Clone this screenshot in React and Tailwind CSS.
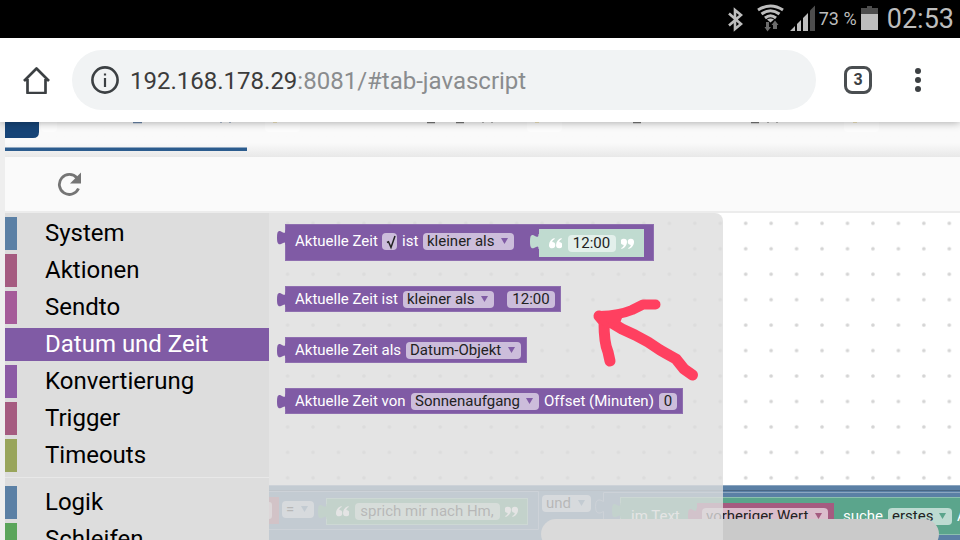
import React from "react";

const CATEGORIES = [
  { name: "System", color: "bg-[#5b80a5]" },
  { name: "Aktionen", color: "bg-[#a55b80]" },
  { name: "Sendto", color: "bg-[#a55b99]" },
  { name: "Datum und Zeit", color: "bg-[#805ba5]", active: true },
  { name: "Konvertierung", color: "bg-[#8c5ba5]" },
  { name: "Trigger", color: "bg-[#a55b80]" },
  { name: "Timeouts", color: "bg-[#99a55b]" },
];

const MORE_CATEGORIES = [
  { name: "Logik", color: "bg-[#5b80a5]" },
  { name: "Schleifen", color: "bg-[#5ba55b]" },
];

function StatusBar() {
  return (
    <div className="flex h-[38px] shrink-0 items-center justify-end bg-black pr-1.5 text-[#bdbdbd]">
      <svg className="h-[38px] w-[90px]" viewBox="726 0 90 38" fill="none" aria-hidden="true">
        <path d="M729 13.500l12 10.500-6 5V10l6 5-12 10.500" stroke="#bdbdbd" strokeWidth="2.600" />
        <g stroke="#bdbdbd" strokeWidth="3">
          <path d="M758 10q12.500-8 25 0" />
          <path d="M761.500 14q9-6.500 18 0" />
          <path d="M765 18q5.500-4.500 11 0" />
        </g>
        <path d="M767 19.500q3.500-2 7 0l-3.500 3z" fill="#bdbdbd" />
        <path d="M766 22h3v5h2l-3.500 4.500L764.500 27h1.500z M773 29v-4h-1.500l3.500-4.500 3.500 4.500H777v4z" fill="#6b6b6b" />
        <path d="M790 31l5-5v5z M797 24l4-4v11h-4z M803 18l5-5v18h-5z" fill="#bdbdbd" />
        <path d="M810 10.500l5-5V31h-5z" fill="#4d4d4d" />
      </svg>
      <span className="ml-[3px] w-[42px] whitespace-nowrap text-[18px] leading-[38px]">73 %</span>
      <svg className="h-[38px] w-[18px]" viewBox="861 0 18 38" aria-hidden="true">
        <path d="M861 8h6V6h5v2h6v6h-17z" fill="#4d4d4d" />
        <path d="M861 14h17v16h-17z" fill="#bdbdbd" />
      </svg>
      <span className="ml-2 text-[27px] leading-[38px]">02:53</span>
    </div>
  );
}

function BrowserBar() {
  return (
    <header className="relative z-10 flex h-[84px] shrink-0 items-center bg-white shadow-[0_1px_8px_rgba(0,0,0,0.3)]">
      <button type="button" aria-label="Startseite" className="ml-[22px] h-7 w-7">
        <svg viewBox="22 66 28 28" fill="none" stroke="#3c4043" strokeWidth="2.700" strokeLinejoin="round" aria-hidden="true">
          <path d="M24 81L36.500 68.500 49 81M27.500 79v14h18V79" />
        </svg>
      </button>
      <button
        type="button"
        aria-label="Adressleiste"
        className="ml-[22px] flex h-[60px] min-w-0 flex-1 items-center rounded-full bg-[#f1f3f4] pl-[18px] text-left text-[24px] text-[#3c3c3c]"
      >
        <svg className="mr-2.5 h-[30px] w-[30px] shrink-0" viewBox="0 0 30 30" fill="none" aria-hidden="true">
          <circle cx="15" cy="15" r="12.600" stroke="#3c4043" strokeWidth="2.600" />
          <path d="M13.900 8.500h2.200v2h-2.200zM13.900 13h2.200v9h-2.200z" fill="#3c4043" />
        </svg>
        <span className="pt-0.5">192.168.178.29</span>
        <span className="truncate pt-0.5 text-[#8a8c8e]">:8081/#tab-javascript</span>
      </button>
      <button
        type="button"
        aria-label="Tabs"
        className="ml-7 flex h-7 w-7 items-center justify-center rounded-lg border-[3px] border-[#4a4e51] text-[16px] font-bold text-[#3c4043]"
      >
        3
      </button>
      <button type="button" aria-label="Mehr" className="mr-7 ml-8 h-7 w-7">
        <svg viewBox="0 0 28 28" fill="#3c4043" aria-hidden="true">
          <circle cx="14" cy="5" r="3" />
          <circle cx="14" cy="14" r="3" />
          <circle cx="14" cy="23" r="3" />
        </svg>
      </button>
    </header>
  );
}

function TabStrip() {
  return (
    <div className="h-[35px] shrink-0 overflow-hidden bg-linear-to-b from-[#fafafa] from-60% to-[#e8e8e8]">
      <svg className="h-[35px] w-[955px]" viewBox="5 122 955 35" aria-hidden="true">
        <path d="M5 118h34v14q0 6-6 6H5z" fill="#164477" />
        <path d="M5 147.500h242v3.500H5z" fill="#2c5c8e" />
        <g fill="#fdfdfd">
          <rect x="41" y="116" width="16" height="16" rx="4" />
          <rect x="265" y="116" width="35" height="16" rx="4" />
          <rect x="527" y="116" width="35" height="16" rx="4" />
          <rect x="844" y="116" width="35" height="16" rx="4" />
        </g>
        <path d="M133 122h9v1.200h-9zM220 122h2v.6h-2zM229 122h2v.6h-2z" fill="#6b86ab" />
        <path d="M427 122h8v1.200h-8zM456 122h8v1.200h-8zM482 122h2v.6h-2zM491 122h2v.6h-2zM633 122h8v1.200h-8zM751 122h8v1.200h-8zM767 122h2v.6h-2zM776 122h2v.6h-2z" fill="#777" />
        <path d="M273 122h4v.6h-4zM535 122h4v.6h-4zM853 122h4v.6h-4z" fill="#e6cf83" />
      </svg>
    </div>
  );
}

function Category({ name, color, active }) {
  return (
    <button
      type="button"
      className={
        active
          ? "flex h-[33px] w-full items-start bg-[#805ba5] text-white"
          : "flex h-[33px] w-full items-start text-black"
      }
    >
      <span className={`h-full w-3 ${color}`} />
      <span className="ml-7 text-[24px] leading-8">{name}</span>
    </button>
  );
}

function Sidebar() {
  return (
    <nav className="w-[264px] shrink-0 overflow-hidden bg-[#ddd] pt-1">
      <div className="flex flex-col gap-1">
        {CATEGORIES.map((c) => (
          <Category key={c.name} {...c} />
        ))}
      </div>
      <hr className="mt-[5px] mb-2 border-t border-[#e8e8e8]" />
      <div className="flex flex-col gap-1">
        {MORE_CATEGORIES.map((c) => (
          <Category key={c.name} {...c} />
        ))}
      </div>
    </nav>
  );
}

function Dropdown({ label, value, width, tint = "bg-[#ccbddb]", arrow = "#805ba5" }) {
  return (
    <span className={`relative flex h-[17px] shrink-0 rounded ${tint} ${width}`}>
      <select aria-label={label} className="h-[17px] w-full appearance-none pl-1 text-[15px] leading-[17px] font-normal text-[#222] outline-none">
        <option>{value}</option>
      </select>
      <svg className="pointer-events-none absolute top-[5px] right-[6px] h-1.5 w-[7px]" viewBox="0 0 7 6" aria-hidden="true">
        <path d="M0 0h7L3.500 6z" fill={arrow} />
      </svg>
    </span>
  );
}

function TextField({ label, value, width, tint = "bg-[#ccbddb]" }) {
  return (
    <input
      aria-label={label}
      defaultValue={value}
      className={`h-[17px] shrink-0 rounded text-center text-[15px] leading-[17px] font-normal text-[#222] outline-none ${tint} ${width}`}
    />
  );
}

function Notch({ color, className = "top-[5px] -left-[9px]" }) {
  return (
    <svg className={`absolute h-[15px] w-[9px] ${className}`} viewBox="0 0 9 15" aria-hidden="true">
      <path d="M9 0v15H8.500c0-4-1.500-2.500-4.500-1C1 15 0 13 0 7.500S1 0 4 1.500C7 3 8.500 4 8.500 0z" fill={color} />
    </svg>
  );
}

function Quote({ close }) {
  return (
    <svg className="h-[11px] w-[13px] shrink-0" viewBox="0 0 12 10" aria-hidden="true">
      <g fill="#fff" transform={close ? "rotate(180 6 5)" : undefined}>
        <path d="M5 0C2 1 0 3.500 0 6.500a2.900 2.900 0 1 0 3-2.800C3 2.500 4 1.500 5.300.800z" />
        <path d="M11.500 0c-3 1-5 3.500-5 6.500a2.900 2.900 0 1 0 3-2.800c0-1.200 1-2.200 2.300-2.900z" />
      </g>
    </svg>
  );
}

function Block({ children, size = "h-[26px]" }) {
  return (
    <div className={`relative flex items-start border border-[#8f6fb0] bg-[#805ba5] pr-[5px] pl-[9px] text-[15px] leading-[17px] whitespace-nowrap text-white ${size}`}>
      <Notch color="#805ba5" />
      {children}
    </div>
  );
}

function Flyout() {
  return (
    <div className="absolute inset-y-0 left-0 flex w-[454px] flex-col items-start gap-[25px] rounded-tr-lg bg-[#ddd]/80 pt-[11px] pl-4">
      <Block size="h-[37px]">
        <span className="mt-2 w-[87px]">Aktuelle Zeit</span>
        <span className="relative mt-2 h-[17px] w-[15px]">
          <input type="checkbox" defaultChecked aria-label="Aktuelle Zeit" className="block h-[17px] w-[15px] appearance-none rounded bg-[#ccbddb]" />
          <svg className="pointer-events-none absolute inset-0 h-[17px] w-[15px]" viewBox="0 0 15 17" fill="none" stroke="#222" aria-hidden="true">
            <path d="M5 9.500l1.500-.800L9 14.500 13 3" strokeWidth="1.500" />
          </svg>
        </span>
        <span className="mt-2 ml-[5px] w-[21px]">ist</span>
        <div className="mt-2">
          <Dropdown label="Vergleich" value="kleiner als" width="w-[91px]" />
        </div>
        <div className="relative mt-1 mr-1 ml-[25px] flex h-[28px] w-[105px] items-center justify-between bg-[#c0dbd0] px-2.5">
          <Notch color="#c0dbd0" />
          <Quote />
          <TextField label="Uhrzeit als Text" value="12:00" width="w-12" tint="bg-[#e3f0eb]" />
          <Quote close />
        </div>
      </Block>
      <Block>
        <span className="mt-1 w-[108px]">Aktuelle Zeit ist</span>
        <div className="mt-1 mr-[13px]">
          <Dropdown label="Vergleich" value="kleiner als" width="w-[91px]" />
        </div>
        <div className="mt-1 flex">
          <TextField label="Uhrzeit" value="12:00" width="w-12" />
        </div>
      </Block>
      <Block>
        <span className="mt-1 w-[111px]">Aktuelle Zeit als</span>
        <div className="mt-1">
          <Dropdown label="Format" value="Datum-Objekt" width="w-[115px]" />
        </div>
      </Block>
      <Block>
        <span className="mt-1 w-[116px]">Aktuelle Zeit von</span>
        <div className="mt-1">
          <Dropdown label="Astrozeit" value="Sonnenaufgang" width="w-[128px]" />
        </div>
        <span className="mt-1 ml-[5px] w-[115px]">Offset (Minuten)</span>
        <div className="mt-1 flex">
          <TextField label="Offset in Minuten" value="0" width="w-[18px]" />
        </div>
      </Block>
    </div>
  );
}

function WorkspaceBlocks() {
  return (
    <div className="absolute inset-x-0 top-[272px] h-[60px] overflow-hidden bg-[#5b80a5] text-[15px] leading-[17px] whitespace-nowrap text-white">
      <svg className="absolute top-0 left-0 h-[60px] w-[691px]" viewBox="269 485 691 60" fill="none" aria-hidden="true">
        <path d="M269 485.500h691M269 491.500h269.500v38H269M960 492.500H603.500v9q-8-5-8 5t8 5V545" stroke="#8ca6c0" />
        <path d="M269 490.500h691" stroke="#496684" />
      </svg>
      <div className="absolute top-3 left-0 h-[27px] w-2.5 bg-[#a55b6d]">
        <div className="mt-[5px] h-[17px] w-[3px] rounded-r bg-[#dbbdc5]" />
      </div>
      <div className="absolute top-4 left-[13px]">
        <Dropdown label="Operator" value="=" width="w-8" tint="bg-[#bdccdb]" arrow="#5b80a5" />
      </div>
      <div className="absolute top-[13px] left-[57px] flex h-[27px] w-[202px] items-center justify-between border border-[#8cc0ae] bg-[#5ba580] px-[9px]">
        <Notch color="#5ba580" />
        <Quote />
        <TextField label="Text" value="sprich mir nach Hm," width="w-[145px]" tint="bg-[#bddbcc]" />
        <Quote close />
      </div>
      <div className="absolute top-2.5 left-[273px]">
        <Dropdown label="Verknüpfung" value="und" width="w-[49px]" tint="bg-[#bdccdb]" arrow="#5b80a5" />
      </div>
      <div className="absolute top-3 right-0 left-[351px] flex h-[38px] border-y border-l border-[#8cc0ae] bg-[#5ba58c] pt-[5px]">
        <Notch color="#5ba58c" />
        <span className="mt-[5px] ml-2.5 w-[66px] shrink-0">im Text</span>
        <div className="relative flex h-[28px] w-[137px] shrink-0 bg-[#a55b80] pt-[5px] pl-[5px]">
          <Notch color="#a55b80" />
          <Dropdown label="Variable" value="vorheriger Wert" width="w-[126px]" tint="bg-[#dbbdcc]" arrow="#a55b80" />
        </div>
        <span className="mt-[5px] ml-[9px] w-[45px] shrink-0">suche</span>
        <div className="mt-[5px] mr-[5px]">
          <Dropdown label="Vorkommen" value="erstes" width="w-[64px]" tint="bg-[#bddbd1]" arrow="#5ba58c" />
        </div>
        <span className="mt-[5px]">Auftreten</span>
      </div>
      <div className="absolute top-[34px] right-[21px] left-[272px] h-[30px] rounded-full bg-[#cacaca]" />
    </div>
  );
}

function Workspace() {
  return (
    <main className="relative min-w-0 flex-1 overflow-hidden bg-white">
      <svg className="absolute inset-0 h-full w-full" aria-hidden="true">
        <defs>
          <pattern id="grid" x="5.900" y="-2.450" width="25.450" height="25.450" patternUnits="userSpaceOnUse">
            <circle cx="12.700" cy="12.700" r="1.800" fill="#d4d4d4" />
          </pattern>
        </defs>
        <rect width="100%" height="100%" fill="url(#grid)" />
      </svg>
      <WorkspaceBlocks />
      <Flyout />
      <svg className="pointer-events-none absolute top-[80px] left-[316px] h-24 w-[120px]" viewBox="585 293 120 96" fill="none" stroke="#ff4060" strokeLinecap="round" strokeLinejoin="round" aria-hidden="true">
        <path d="M600 316Q620 315 632 310L643 304.500 655.500 304.500" strokeWidth="10" />
        <path d="M599 316L604 322Q604 343 608 352L610 361" strokeWidth="11" />
        <path d="M602 317L622 329 635 335 648 342 660 350 667 354 676 359 684 369 692.500 375" strokeWidth="11" />
        <path d="M600 316L620 316 617 324 606 326z" fill="#ff4060" strokeWidth="5" />
      </svg>
    </main>
  );
}

export default function App() {
  return (
    <div className="flex h-screen flex-col overflow-hidden bg-[#eee] font-['Roboto',sans-serif]">
      <StatusBar />
      <BrowserBar />
      <div className="flex min-h-0 flex-1 flex-col pl-[5px]">
        <TabStrip />
        <div className="flex h-14 shrink-0 items-center border-b-2 border-[#ececec] bg-[#fafafa]">
          <button type="button" aria-label="Neu laden" className="ml-[52px] h-6 w-6">
            <svg viewBox="57 172 24 24" fill="none" aria-hidden="true">
              <path d="M77 178A10 10 0 1 0 78.500 188.500" stroke="#757575" strokeWidth="2.800" />
              <path d="M81 172.500v11H70z" fill="#757575" />
            </svg>
          </button>
        </div>
        <div className="flex min-h-0 flex-1">
          <Sidebar />
          <Workspace />
        </div>
      </div>
    </div>
  );
}
